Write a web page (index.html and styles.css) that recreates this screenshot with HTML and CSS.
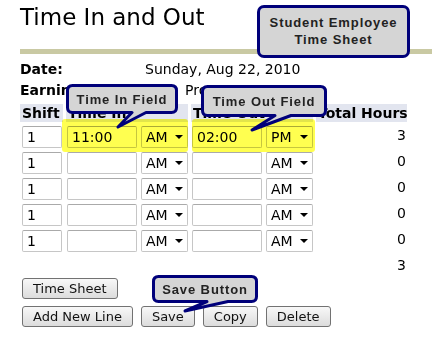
FILE: index.html
```html
<!DOCTYPE html>
<html lang="en">

<head>
    <meta charset="UTF-8">
    <meta name="viewport" content="width=device-width, initial-scale=1.0">
    <title>Time In and Out</title>
    <link rel="stylesheet" href="styles.css">
</head>

<body>
    <div class="page">
        <h1 class="title">Time In and Out</h1>
        <div class="rule"></div>

        <div class="info">
            <div class="info-row"><span class="info-label">Date:</span><span>Sunday, Aug 22, 2010</span></div>
            <div class="info-row"><span class="info-label">Earnings:</span><span class="info-shift">Program</span></div>
        </div>

        <div class="sheet">
            <div class="head">Shift</div>
            <div class="head">Time In</div>
            <div class="head">Time Out</div>
            <div class="head">Total Hours</div>

            <!-- row 1 -->
            <div class="cell-shift"><input class="field field-shift" value="1"></div>
            <div class="cell-time">
                <input class="field field-time" value="11:00">
                <span class="ampm"><select><option selected>AM</option><option>PM</option></select></span>
            </div>
            <div class="cell-time">
                <input class="field field-time" value="02:00">
                <span class="ampm"><select><option>AM</option><option selected>PM</option></select></span>
            </div>
            <div class="cell-total">3</div>

            <!-- row 2 -->
            <div class="cell-shift"><input class="field field-shift" value="1"></div>
            <div class="cell-time">
                <input class="field field-time" value="">
                <span class="ampm"><select><option>AM</option><option>PM</option></select></span>
            </div>
            <div class="cell-time">
                <input class="field field-time" value="">
                <span class="ampm"><select><option>AM</option><option>PM</option></select></span>
            </div>
            <div class="cell-total">0</div>

            <!-- row 3 -->
            <div class="cell-shift"><input class="field field-shift" value="1"></div>
            <div class="cell-time">
                <input class="field field-time" value="">
                <span class="ampm"><select><option>AM</option><option>PM</option></select></span>
            </div>
            <div class="cell-time">
                <input class="field field-time" value="">
                <span class="ampm"><select><option>AM</option><option>PM</option></select></span>
            </div>
            <div class="cell-total">0</div>

            <!-- row 4 -->
            <div class="cell-shift"><input class="field field-shift" value="1"></div>
            <div class="cell-time">
                <input class="field field-time" value="">
                <span class="ampm"><select><option>AM</option><option>PM</option></select></span>
            </div>
            <div class="cell-time">
                <input class="field field-time" value="">
                <span class="ampm"><select><option>AM</option><option>PM</option></select></span>
            </div>
            <div class="cell-total">0</div>

            <!-- row 5 -->
            <div class="cell-shift"><input class="field field-shift" value="1"></div>
            <div class="cell-time">
                <input class="field field-time" value="">
                <span class="ampm"><select><option>AM</option><option>PM</option></select></span>
            </div>
            <div class="cell-time">
                <input class="field field-time" value="">
                <span class="ampm"><select><option>AM</option><option>PM</option></select></span>
            </div>
            <div class="cell-total">0</div>

            <!-- sum -->
            <div class="cell-sum">3</div>
        </div>

        <div class="actions">
            <div class="actions-row">
                <button class="btn">Time Sheet</button>
            </div>
            <div class="actions-row">
                <button class="btn">Add New Line</button>
                <button class="btn">Save</button>
                <button class="btn">Copy</button>
                <button class="btn">Delete</button>
            </div>
        </div>
    </div>

    <!-- highlighted fields -->
    <div class="highlight highlight-in"></div>
    <div class="highlight highlight-out"></div>

    <!-- callouts -->
    <div class="callout-title">Student Employee<br>Time Sheet</div>

    <div class="callout callout-in">
        <svg class="callout-shape" width="112" height="45" viewBox="0 0 112 45">
            <path d="M6.5 1.5 H105.5 Q110.5 1.5 110.5 6.5 V23.5 Q110.5 28.5 105.5 28.5 H80 L52 43 L66 28.5 H6.5 Q1.5 28.5 1.5 23.5 V6.5 Q1.5 1.5 6.5 1.5 Z" />
        </svg>
        <span class="callout-text">Time In Field</span>
    </div>

    <div class="callout callout-out">
        <svg class="callout-shape" width="126" height="47" viewBox="0 0 126 47">
            <path d="M6.5 1.5 H119.5 Q124.5 1.5 124.5 6.5 V25.5 Q124.5 30.5 119.5 30.5 H90 L51 45 L74 30.5 H6.5 Q1.5 30.5 1.5 25.5 V6.5 Q1.5 1.5 6.5 1.5 Z" />
        </svg>
        <span class="callout-text">Time Out Field</span>
    </div>

    <div class="callout callout-save">
        <svg class="callout-shape" width="106" height="38" viewBox="0 0 106 38">
            <path d="M6.5 1.5 H99.5 Q104.5 1.5 104.5 6.5 V21.5 Q104.5 26.5 99.5 26.5 H76 L33 36 L55 26.5 H6.5 Q1.5 26.5 1.5 21.5 V6.5 Q1.5 1.5 6.5 1.5 Z" />
        </svg>
        <span class="callout-text">Save Button</span>
    </div>
</body>

</html>
```

FILE: styles.css
```css
body {
    margin: 0;
    font-family: "DejaVu Sans", Verdana, sans-serif;
    font-size: 14px;
    color: #000;
    background-color: #fff;
}

.page {
    padding: 3px 0 0 20px;
}

.title {
    margin: 0;
    font-size: 23px;
    font-weight: normal;
    line-height: 28px;
}

.rule {
    height: 5px;
    margin-top: 18px;
    background-color: #c9c9a3;
}

.info {
    margin-top: 5px;
}

.info-row {
    display: flex;
    height: 21px;
    line-height: 21px;
}

.info-label {
    width: 125px;
    font-weight: bold;
}

.info-shift {
    padding-left: 40px;
}

.sheet {
    display: grid;
    grid-template-columns: 43px 122px 122px 91px;
    grid-template-rows: 18px repeat(5, 22px) 18px;
    column-gap: 3px;
    row-gap: 4px;
    margin-top: 3px;
}

.head {
    padding-left: 2px;
    line-height: 18px;
    font-weight: bold;
    white-space: nowrap;
    background-color: #e2e5ef;
}

.cell-shift {
    padding-left: 2px;
}

.cell-time {
    display: flex;
    gap: 4px;
    padding-left: 1px;
}

.cell-total,
.cell-sum {
    padding-right: 1px;
    line-height: 18px;
    text-align: right;
}

.cell-sum {
    grid-column: 4;
}

.field {
    box-sizing: border-box;
    height: 22px;
    padding: 0 0 0 4px;
    border: 1px solid #c6c6c6;
    border-top-color: #aaaaaa;
    border-radius: 2px;
    background-color: #fff;
    font-family: "DejaVu Sans", Verdana, sans-serif;
    font-size: 14px;
    color: #000;
}

.field-shift {
    width: 40px;
}

.field-time {
    width: 70px;
}

.ampm {
    position: relative;
    display: block;
}

.ampm select {
    appearance: none;
    -webkit-appearance: none;
    box-sizing: border-box;
    width: 47px;
    height: 22px;
    padding: 0 0 0 4px;
    border: 1px solid #c6c6c6;
    border-top-color: #aaaaaa;
    border-radius: 2px;
    background-color: #fff;
    font-family: "DejaVu Sans", Verdana, sans-serif;
    font-size: 14px;
    color: #000;
}

.ampm::after {
    content: "";
    position: absolute;
    right: 5px;
    top: 9px;
    border-left: 4px solid transparent;
    border-right: 4px solid transparent;
    border-top: 4px solid #000;
}

.actions {
    display: flex;
    flex-direction: column;
    gap: 7px;
    margin-top: 4px;
    padding-left: 2px;
}

.actions-row {
    display: flex;
    gap: 8px;
}

.btn {
    box-sizing: border-box;
    height: 21px;
    padding: 0 10px;
    border: 1px solid #727272;
    border-radius: 3px;
    background: linear-gradient(#f8f8f8, #dcdcdc);
    font-family: "DejaVu Sans", Verdana, sans-serif;
    font-size: 13px;
    line-height: 19px;
    color: #111;
}

.highlight {
    position: absolute;
    top: 119px;
    height: 33px;
    border-radius: 3px;
    background-color: #ffff50;
    mix-blend-mode: multiply;
}

.highlight-in {
    left: 62px;
    width: 126px;
}

.highlight-out {
    left: 192px;
    width: 123px;
}

.callout-title {
    position: absolute;
    left: 257px;
    top: 5px;
    box-sizing: border-box;
    width: 153px;
    height: 53px;
    padding-top: 6px;
    border: 3px solid #00007a;
    border-radius: 7px;
    background-color: #d5d5d5;
    font-family: "Liberation Sans", Arial, sans-serif;
    font-size: 13px;
    font-weight: bold;
    line-height: 17px;
    letter-spacing: 0.9px;
    text-align: center;
    color: #222;
}

.callout {
    position: absolute;
}

.callout-shape {
    position: absolute;
    left: 0;
    top: 0;
}

.callout-shape path {
    fill: #d5d5d5;
    stroke: #00007a;
    stroke-width: 3;
    stroke-linejoin: round;
}

.callout-text {
    position: absolute;
    left: 0;
    top: 0;
    display: flex;
    align-items: center;
    justify-content: center;
    font-family: "Liberation Sans", Arial, sans-serif;
    font-size: 13px;
    font-weight: bold;
    letter-spacing: 0.9px;
    white-space: nowrap;
    color: #222;
}

.callout-in {
    left: 66px;
    top: 84px;
}

.callout-in .callout-text {
    width: 112px;
    height: 30px;
}

.callout-out {
    left: 201px;
    top: 85px;
}

.callout-out .callout-text {
    width: 126px;
    height: 32px;
}

.callout-save {
    left: 152px;
    top: 275px;
}

.callout-save .callout-text {
    width: 106px;
    height: 28px;
}
```
